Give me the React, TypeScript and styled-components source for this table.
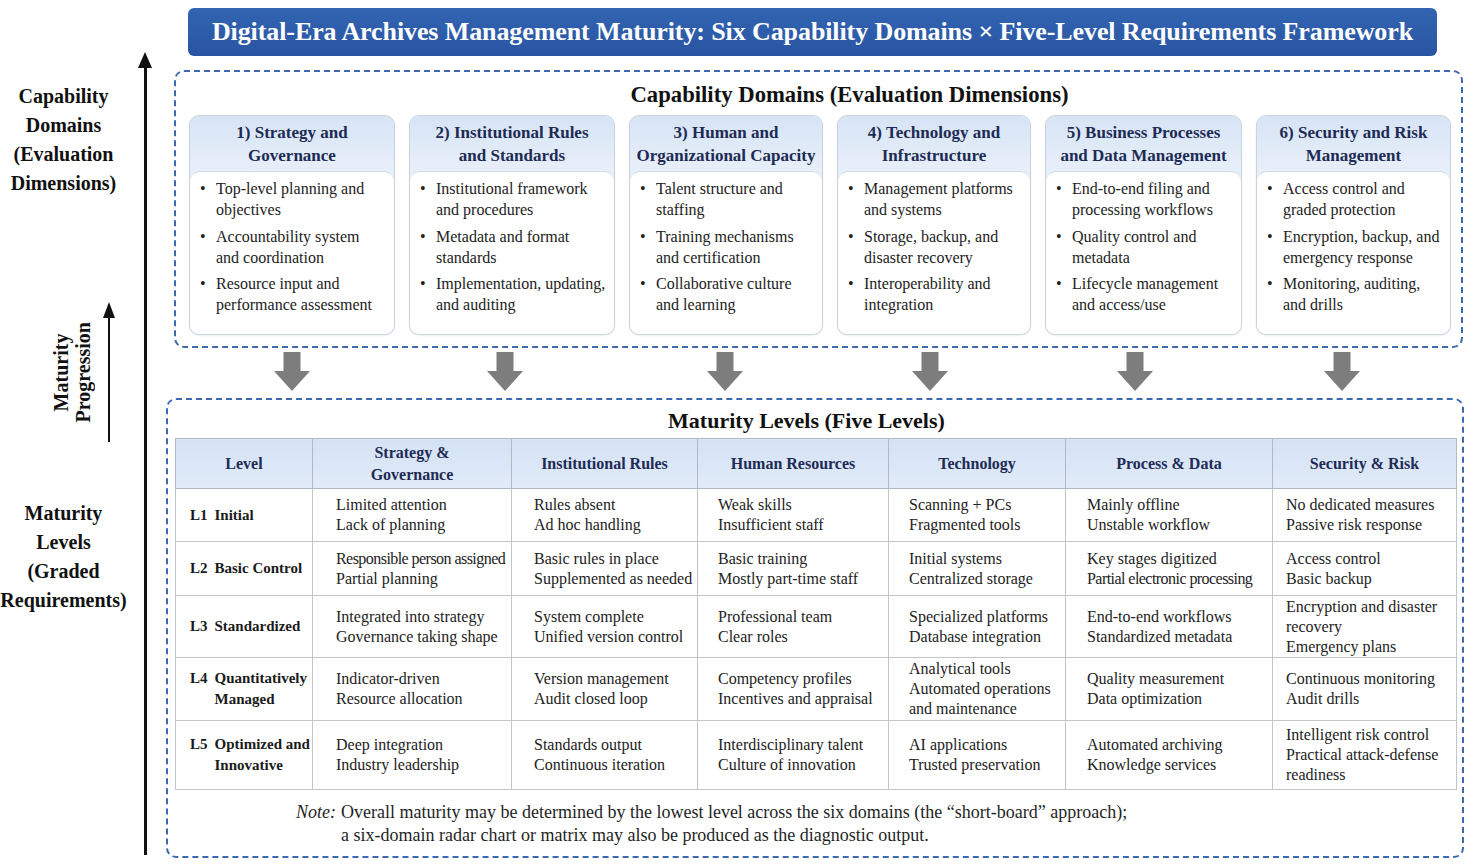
import React from "react";
import styled, { createGlobalStyle } from "styled-components";

const GlobalStyle = createGlobalStyle`
  html, body {
    margin: 0;
    padding: 0;
    background: #fff;
  }
  body {
    font-family: "Liberation Serif", "Times New Roman", serif;
    color: #1c1c1c;
  }
`;

const NAVY = "#1d2b55";
const DASH = "#3c69b2";

const Page = styled.div`
  display: flex;
  width: 1476px;
  height: 865px;
  overflow: hidden;
`;

/* ---------- left rail ---------- */

const LeftRail = styled.div`
  display: grid;
  grid-template-columns: 127px 36px;
  width: 166px;
  flex-shrink: 0;
`;

const LabelCol = styled.div`
  display: flex;
  flex-direction: column;
  align-items: center;
`;

const SideLabel = styled.div<{ $top: number }>`
  margin-top: ${(p) => p.$top}px;
  font-size: 20px;
  font-weight: 700;
  line-height: 29px;
  text-align: center;
  color: #111;
  white-space: nowrap;
`;

const Progression = styled.div`
  display: flex;
  align-items: center;
  gap: 9px;
  align-self: flex-end;
  margin-right: 12px;
  margin-top: 104px;
  height: 140px;
`;

const ProgressionText = styled.div`
  writing-mode: vertical-rl;
  transform: rotate(180deg);
  font-size: 20px;
  font-weight: 700;
  line-height: 22px;
  text-align: center;
  color: #111;
`;

const ArrowStem = styled.div<{ $w: number }>`
  display: flex;
  flex-direction: column;
  align-items: center;
  height: 100%;

  &::before {
    content: "";
    border-left: ${(p) => p.$w + 4}px solid transparent;
    border-right: ${(p) => p.$w + 4}px solid transparent;
    border-bottom: 16px solid #111;
  }
`;

const StemLine = styled.div<{ $w: number }>`
  flex: 1;
  width: ${(p) => p.$w}px;
  background: #111;
`;

const AxisCol = styled.div`
  display: flex;
  flex-direction: column;
  align-items: center;
  padding: 52px 0 10px;
`;

/* ---------- main ---------- */

const Main = styled.div`
  width: 1298px;
  display: flex;
  flex-direction: column;
  padding-top: 8px;
`;

const TitleBar = styled.h1`
  margin: 0 27px 0 22px;
  height: 48px;
  border-radius: 6px;
  background: linear-gradient(#3264b2, #2955a2);
  color: #fff;
  font-size: 26px;
  font-weight: 700;
  line-height: 48px;
  text-align: center;
  white-space: nowrap;
  letter-spacing: -0.1px;
`;

const DashedBox = styled.section<{ $height: number; $ml: number; $mr: number }>`
  box-sizing: border-box;
  height: ${(p) => p.$height}px;
  margin: 0 ${(p) => p.$mr}px 0 ${(p) => p.$ml}px;
  border: 2px dashed ${DASH};
  border-radius: 10px;
`;

const TopBox = styled(DashedBox)`
  margin-top: 14px;
  padding: 10px 11px 0 13px;
`;

const SectionTitle = styled.h2<{ $shift: number; $size: number }>`
  margin: 0;
  font-size: ${(p) => p.$size}px;
  font-weight: 700;
  line-height: 26px;
  text-align: center;
  color: #111;
  padding-left: ${(p) => Math.max(0, p.$shift * 2)}px;
  padding-right: ${(p) => Math.max(0, -p.$shift * 2)}px;
`;

const COLS = "206px 206px 194px 194px 197px 195px";

const CardGrid = styled.div`
  display: grid;
  grid-template-columns: ${COLS};
  column-gap: 14px;
  margin-top: 7px;
`;

const Card = styled.div`
  box-sizing: border-box;
  height: 220px;
  display: flex;
  flex-direction: column;
  border: 1px solid #cdd3dc;
  border-radius: 10px;
  overflow: hidden;
  background: #e6eef9;
  box-shadow: 0 1px 2px rgba(40, 60, 100, 0.08);
`;

const CardHead = styled.div`
  height: 55px;
  flex-shrink: 0;
  padding-top: 5px;
  box-sizing: border-box;
  background: linear-gradient(#d7e4f5, #e7eff9);
  color: ${NAVY};
  font-size: 17px;
  font-weight: 700;
  line-height: 23px;
  text-align: center;
  white-space: nowrap;
`;

const CardBody = styled.ul`
  flex: 1;
  margin: 0;
  list-style: none;
  padding: 6px 6px 0 10px;
  background: #fff;
  border-top: 1px solid #d3dae4;
  border-radius: 10px 10px 0 0;
`;

const Bullet = styled.li`
  display: flex;
  font-size: 16px;
  line-height: 21px;
  color: #222;
  margin-bottom: 5.5px;
  white-space: nowrap;
`;

const Dot = styled.span`
  width: 16px;
  flex-shrink: 0;
`;

const ArrowRow = styled.div`
  display: grid;
  grid-template-columns: 213px 220px 205px 205px 207px 36px;
  height: 50px;
  box-sizing: border-box;
  padding: 4px 0 0 108px;
`;

const DownArrow = () => (
  <svg width="36" height="39" viewBox="0 0 36 39">
    <rect x="9.5" y="0" width="17" height="20" fill="#7d7d7d" />
    <polygon points="0,19 36,19 18,39" fill="#7d7d7d" />
  </svg>
);

const BottomBox = styled(DashedBox)`
  padding: 8px 6px 0 7px;
`;

const Table = styled.table`
  width: 1281px;
  border-collapse: collapse;
  table-layout: fixed;
  margin-top: 4px;
  border: 1px solid #b3b9c2;
`;

const Th = styled.th`
  height: 49px;
  padding: 0 6px;
  background: linear-gradient(#d4e2f5, #e1ebf8);
  color: ${NAVY};
  font-size: 16px;
  font-weight: 700;
  line-height: 22px;
  text-align: center;
  border: 1px solid #b3b9c2;
`;

const Td = styled.td<{ $padL: number }>`
  padding: 0 4px 0 ${(p) => p.$padL}px;
  font-size: 16px;
  line-height: 20px;
  color: #222;
  border: 1px solid #c0c5cc;
  vertical-align: middle;
  white-space: nowrap;
`;

const CellLine = styled.div<{ $tight: boolean }>`
  letter-spacing: ${(p) => (p.$tight ? "-0.55px" : "0")};
`;

const LevelCell = styled.td`
  padding: 0 0 0 14px;
  border: 1px solid #c0c5cc;
  vertical-align: middle;
`;

const LevelWrap = styled.div`
  display: flex;
  gap: 7px;
  font-size: 15px;
  font-weight: 700;
  line-height: 21px;
  color: #1a1a1a;
  white-space: nowrap;
`;

const Note = styled.div`
  display: flex;
  gap: 5px;
  margin-top: 11px;
  padding-left: 121px;
  font-size: 18px;
  line-height: 23px;
  color: #1f1f1f;
`;

const NoteLabel = styled.i`
  font-style: italic;
`;

/* ---------- data ---------- */

type Domain = { title: string[]; items: string[][] };

const domains: Domain[] = [
  {
    title: ["1) Strategy and", "Governance"],
    items: [
      ["Top-level planning and", "objectives"],
      ["Accountability system", "and coordination"],
      ["Resource input and", "performance assessment"],
    ],
  },
  {
    title: ["2) Institutional Rules", "and Standards"],
    items: [
      ["Institutional framework", "and procedures"],
      ["Metadata and format", "standards"],
      ["Implementation, updating,", "and auditing"],
    ],
  },
  {
    title: ["3) Human and", "Organizational Capacity"],
    items: [
      ["Talent structure and", "staffing"],
      ["Training mechanisms", "and certification"],
      ["Collaborative culture", "and learning"],
    ],
  },
  {
    title: ["4) Technology and", "Infrastructure"],
    items: [
      ["Management platforms", "and systems"],
      ["Storage, backup, and", "disaster recovery"],
      ["Interoperability and", "integration"],
    ],
  },
  {
    title: ["5) Business Processes", "and Data Management"],
    items: [
      ["End-to-end filing and", "processing workflows"],
      ["Quality control and", "metadata"],
      ["Lifecycle management", "and access/use"],
    ],
  },
  {
    title: ["6) Security and Risk", "Management"],
    items: [
      ["Access control and", "graded protection"],
      ["Encryption, backup, and", "emergency response"],
      ["Monitoring, auditing,", "and drills"],
    ],
  },
];

const columns = [
  { label: ["Level"], width: 137, pad: 0 },
  { label: ["Strategy &", "Governance"], width: 199, pad: 23 },
  { label: ["Institutional Rules"], width: 186, pad: 22 },
  { label: ["Human Resources"], width: 191, pad: 20 },
  { label: ["Technology"], width: 177, pad: 20 },
  { label: ["Process & Data"], width: 207, pad: 21 },
  { label: ["Security & Risk"], width: 184, pad: 13 },
];

// lines the reference squeezes to fit their column
const tightLines = new Set(["Responsible person assigned", "Partial electronic processing"]);

type Level = { code: string; name: string[]; height: number; cells: string[][] };

const levels: Level[] = [
  {
    code: "L1",
    name: ["Initial"],
    height: 53,
    cells: [
      ["Limited attention", "Lack of planning"],
      ["Rules absent", "Ad hoc handling"],
      ["Weak skills", "Insufficient staff"],
      ["Scanning + PCs", "Fragmented tools"],
      ["Mainly offline", "Unstable workflow"],
      ["No dedicated measures", "Passive risk response"],
    ],
  },
  {
    code: "L2",
    name: ["Basic Control"],
    height: 54,
    cells: [
      ["Responsible person assigned", "Partial planning"],
      ["Basic rules in place", "Supplemented as needed"],
      ["Basic training", "Mostly part-time staff"],
      ["Initial systems", "Centralized storage"],
      ["Key stages digitized", "Partial electronic processing"],
      ["Access control", "Basic backup"],
    ],
  },
  {
    code: "L3",
    name: ["Standardized"],
    height: 62,
    cells: [
      ["Integrated into strategy", "Governance taking shape"],
      ["System complete", "Unified version control"],
      ["Professional team", "Clear roles"],
      ["Specialized platforms", "Database integration"],
      ["End-to-end workflows", "Standardized metadata"],
      ["Encryption and disaster", "recovery", "Emergency plans"],
    ],
  },
  {
    code: "L4",
    name: ["Quantitatively", "Managed"],
    height: 63,
    cells: [
      ["Indicator-driven", "Resource allocation"],
      ["Version management", "Audit closed loop"],
      ["Competency profiles", "Incentives and appraisal"],
      ["Analytical tools", "Automated operations", "and maintenance"],
      ["Quality measurement", "Data optimization"],
      ["Continuous monitoring", "Audit drills"],
    ],
  },
  {
    code: "L5",
    name: ["Optimized and", "Innovative"],
    height: 69,
    cells: [
      ["Deep integration", "Industry leadership"],
      ["Standards output", "Continuous iteration"],
      ["Interdisciplinary talent", "Culture of innovation"],
      ["AI applications", "Trusted preservation"],
      ["Automated archiving", "Knowledge services"],
      ["Intelligent risk control", "Practical attack-defense", "readiness"],
    ],
  },
];

const Lines = ({ lines }: { lines: string[] }) => (
  <>
    {lines.map((l, i) => (
      <React.Fragment key={i}>
        {i > 0 && <br />}
        {l}
      </React.Fragment>
    ))}
  </>
);

export default function App() {
  return (
    <Page>
      <GlobalStyle />
      <LeftRail>
        <LabelCol>
          <SideLabel $top={82}>
            Capability
            <br />
            Domains
            <br />
            (Evaluation
            <br />
            Dimensions)
          </SideLabel>
          <Progression>
            <ProgressionText>
              Maturity
              <br />
              Progression
            </ProgressionText>
            <ArrowStem $w={2}>
              <StemLine $w={2} />
            </ArrowStem>
          </Progression>
          <SideLabel $top={57}>
            Maturity
            <br />
            Levels
            <br />
            (Graded
            <br />
            Requirements)
          </SideLabel>
        </LabelCol>
        <AxisCol>
          <ArrowStem $w={3}>
            <StemLine $w={3} />
          </ArrowStem>
        </AxisCol>
      </LeftRail>

      <Main>
        <TitleBar>
          Digital-Era Archives Management Maturity: Six Capability Domains × Five-Level Requirements
          Framework
        </TitleBar>

        <TopBox $height={278} $ml={8} $mr={1}>
          <SectionTitle $shift={30} $size={22.7}>
            Capability Domains (Evaluation Dimensions)
          </SectionTitle>
          <CardGrid>
            {domains.map((d) => (
              <Card key={d.title[0]}>
                <CardHead>
                  <Lines lines={d.title} />
                </CardHead>
                <CardBody>
                  {d.items.map((it) => (
                    <Bullet key={it[0]}>
                      <Dot>•</Dot>
                      <span>
                        <Lines lines={it} />
                      </span>
                    </Bullet>
                  ))}
                </CardBody>
              </Card>
            ))}
          </CardGrid>
        </TopBox>

        <ArrowRow>
          {domains.map((d) => (
            <DownArrow key={d.title[0]} />
          ))}
        </ArrowRow>

        <BottomBox $height={460} $ml={0} $mr={0}>
          <SectionTitle $shift={-9} $size={22}>
            Maturity Levels (Five Levels)
          </SectionTitle>
          <Table>
            <colgroup>
              {columns.map((c, i) => (
                <col key={i} style={{ width: c.width }} />
              ))}
            </colgroup>
            <thead>
              <tr>
                {columns.map((c, i) => (
                  <Th key={i}>
                    <Lines lines={c.label} />
                  </Th>
                ))}
              </tr>
            </thead>
            <tbody>
              {levels.map((lv) => (
                <tr key={lv.code} style={{ height: lv.height }}>
                  <LevelCell>
                    <LevelWrap>
                      <span>{lv.code}</span>
                      <span>
                        <Lines lines={lv.name} />
                      </span>
                    </LevelWrap>
                  </LevelCell>
                  {lv.cells.map((cell, i) => (
                    <Td key={i} $padL={columns[i + 1].pad}>
                      {cell.map((line) => (
                        <CellLine key={line} $tight={tightLines.has(line)}>
                          {line}
                        </CellLine>
                      ))}
                    </Td>
                  ))}
                </tr>
              ))}
            </tbody>
          </Table>
          <Note>
            <NoteLabel>Note:</NoteLabel>
            <span>
              Overall maturity may be determined by the lowest level across the six domains (the
              “short-board” approach);
              <br />a six-domain radar chart or matrix may also be produced as the diagnostic output.
            </span>
          </Note>
        </BottomBox>
      </Main>
    </Page>
  );
}
